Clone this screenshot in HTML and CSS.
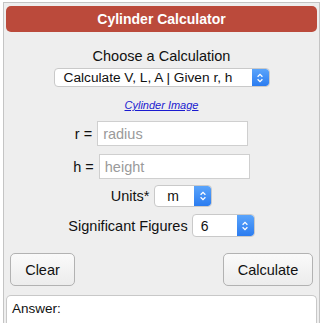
FILE: index.html
```html
<!DOCTYPE html>
<html lang="en">
<head>
    <meta charset="UTF-8">
    <meta name="viewport" content="width=device-width, initial-scale=1.0">
    <title>Cylinder Calculator</title>
    <link rel="stylesheet" href="styles.css">
</head>
<body>
    <div class="calc">
        <div class="calc-title">Cylinder Calculator</div>
        <div class="choose-label">Choose a Calculation</div>
        <div class="select-box select-calc">
            <span class="select-text">Calculate V, L, A | Given r, h</span>
            <span class="select-arrow"><svg viewBox="0 0 10 14" width="8" height="12"><path d="M2 5.5 5 2.5 8 5.5M2 8.5 5 11.5 8 8.5" fill="none" stroke="#fff" stroke-width="1.6"/></svg></span>
        </div>
        <a href="#" class="image-link">Cylinder Image</a>
        <div class="field-row first-row">
            <label class="field-label">r =</label>
            <input type="text" class="field-input" placeholder="radius">
        </div>
        <div class="field-row">
            <label class="field-label">h =</label>
            <input type="text" class="field-input" placeholder="height">
        </div>
        <div class="field-row option-row">
            <span class="field-label">Units*</span>
            <div class="select-box select-units">
                <span class="select-text">m</span>
                <span class="select-arrow"><svg viewBox="0 0 10 14" width="8" height="12"><path d="M2 5.5 5 2.5 8 5.5M2 8.5 5 11.5 8 8.5" fill="none" stroke="#fff" stroke-width="1.6"/></svg></span>
            </div>
        </div>
        <div class="field-row option-row sig-row">
            <span class="field-label">Significant Figures</span>
            <div class="select-box select-sig">
                <span class="select-text">6</span>
                <span class="select-arrow"><svg viewBox="0 0 10 14" width="8" height="12"><path d="M2 5.5 5 2.5 8 5.5M2 8.5 5 11.5 8 8.5" fill="none" stroke="#fff" stroke-width="1.6"/></svg></span>
            </div>
        </div>
        <div class="button-row">
            <button class="btn btn-clear">Clear</button>
            <button class="btn btn-calc">Calculate</button>
        </div>
        <div class="answer">Answer:</div>
    </div>
</body>
</html>
```

FILE: styles.css
```css
body { margin: 0; background: #fff; font-family: "Liberation Sans", Arial, sans-serif; color: #111; }
.calc { margin: 2px 0 0 3px; width: 311px; height: 317px; border: 1px solid #c4c4c4; border-bottom: none; background: #eeeeee; padding: 3px 2px 0 2px; display: flex; flex-direction: column; align-items: center; overflow: hidden; }
.calc-title { flex-shrink: 0; width: 100%; height: 26px; line-height: 27px; background: #bb4a3b; color: #fff; font-weight: bold; font-size: 14px; text-align: center; border-radius: 5px; }
.choose-label { margin-top: 15px; font-size: 14.5px; line-height: 18px; }
.select-box { flex-shrink: 0; display: flex; align-items: center; background: #fff; border: 1px solid #c9c9c9; border-radius: 4px; box-sizing: border-box; overflow: hidden; }
.select-text { flex-grow: 1; font-size: 14px; padding-left: 9px; white-space: nowrap; }
.select-calc .select-text { font-size: 13.7px; }
.select-arrow { width: 17px; height: 100%; background: linear-gradient(#5aa4fb, #2b7cf0); display: flex; align-items: center; justify-content: center; border-radius: 0 3px 3px 0; }
.select-calc { margin-top: 3px; width: 216px; height: 19px; }
.image-link { margin-top: 12px; font-size: 11px; font-style: italic; color: #1a1ad0; line-height: 13px; }
.field-row { flex-shrink: 0; display: flex; align-items: center; justify-content: center; gap: 5px; margin-top: 8px; }
.first-row { margin-top: 9px; }
.field-label { font-size: 14.5px; }
.field-input { width: 151px; height: 25px; box-sizing: border-box; border: 1px solid #cfcfcf; background: #fff; font-size: 14.5px; font-family: "Liberation Sans", Arial, sans-serif; padding: 0 5px; outline: none; }
.field-input::placeholder { color: #9a9a9a; }
.option-row { margin-top: 6px; }
.select-units { width: 58px; height: 22px; }
.select-units .select-text { padding-left: 12px; }
.select-sig { width: 63px; height: 23px; }
.select-sig .select-text { padding-left: 8px; }
.sig-row { margin-top: 7px; gap: 4px; }
.button-row { flex-shrink: 0; width: 100%; display: flex; justify-content: space-between; margin-top: 16px; padding: 0 4px 0 4px; box-sizing: border-box; }
.btn { height: 33px; font-size: 14.5px; font-family: "Liberation Sans", Arial, sans-serif; color: #111; background: linear-gradient(#fafafa, #ececec); border: 1px solid #b2b2b2; border-radius: 5px; }
.btn-clear { width: 65px; }
.btn-calc { width: 90px; }
.answer { width: 100%; box-sizing: border-box; margin-top: 9px; flex-grow: 1; background: #fff; border: 1px solid #c8c8c8; border-bottom: none; border-radius: 5px 5px 0 0; padding: 5px 5px; font-size: 13.5px; }
```
